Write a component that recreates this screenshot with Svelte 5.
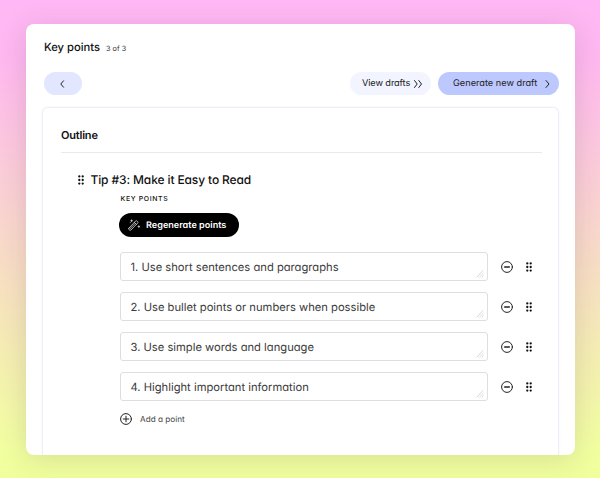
<script lang="ts">
  let points = $state([
    { id: 1, text: 'Use short sentences and paragraphs' },
    { id: 2, text: 'Use bullet points or numbers when possible' },
    { id: 3, text: 'Use simple words and language' },
    { id: 4, text: 'Highlight important information' },
  ]);

  function removePoint(id: number) {
    points = points.filter((p) => p.id !== id);
  }
</script>

{#snippet handle()}
  <svg class="handle" viewBox="0 0 6 10" width="6" height="10" fill="currentColor">
    {#each [1.4, 5, 8.6] as y}
      <circle cx="1.3" cy={y} r="1.15" />
      <circle cx="4.7" cy={y} r="1.15" />
    {/each}
  </svg>
{/snippet}

<div class="backdrop">
  <main class="card">
    <header>
      <h1>Key points</h1>
      <span class="count">3 of 3</span>
    </header>

    <nav>
      <button class="pill back" aria-label="Back">
        <svg viewBox="0 0 5 8" width="5" height="8"><path d="M3.5.8.8 4l2.7 3.2" /></svg>
      </button>
      <button class="pill drafts">
        <span>View drafts</span>
        <svg viewBox="0 0 10 8" width="10" height="8"><path d="M1.5.5l2.7 3.5-2.7 3.5M5.8.5l2.7 3.5-2.7 3.5" /></svg>
      </button>
      <button class="pill generate">
        <span>Generate new draft</span>
        <svg viewBox="0 0 5 8" width="5" height="8"><path d="m1 .5 3 3.5-3 3.5" /></svg>
      </button>
    </nav>

    <section class="panel">
      <h2>Outline</h2>
      <div class="tip">
        {@render handle()}
        <h3>Tip #3: Make it Easy to Read</h3>
      </div>

      <div class="body">
        <div class="eyebrow">KEY POINTS</div>
        <button class="regenerate">
          <svg viewBox="0 0 12 12" width="12" height="12">
            <path d="M.9 9.1 7.6 2q.7-.7 1.4 0l.7.7q.6.7-.1 1.4L2.9 11q-.7.7-1.4 0l-.7-.6q-.6-.6.1-1.3Z" />
            <path d="m6.4 3.4 2 2M2 9.8l5-5.2" />
            <path d="M3.6.9v1.6M2.8 1.7h1.6M10.8 6.8v1.6M10 7.6h1.6M2.2 3.6h.1" />
          </svg>
          <span>Regenerate points</span>
        </button>

        <ul>
          {#each points as point, i (point.id)}
            <li>
              <div class="field">
                <span>{i + 1}. {point.text}</span>
                <svg class="grip" viewBox="0 0 8 8" width="8" height="8"><path d="M.8 7.2 6.9.6M3.4 7.2l3.9-4.1M5.9 7.2l1.5-1.5" /></svg>
              </div>
              <button class="icon" aria-label="Remove point" onclick={() => removePoint(point.id)}>
                <svg viewBox="0 0 12 12" width="12" height="12">
                  <circle cx="6" cy="6" r="5.4" />
                  <path class="bar" d="M3.7 6h4.6" />
                </svg>
              </button>
              {@render handle()}
            </li>
          {/each}
        </ul>

        <button class="add">
          <svg viewBox="0 0 12 12" width="12" height="12">
            <circle cx="6" cy="6" r="5.4" />
            <path d="M3.2 6h5.6M6 3.2v5.6" />
          </svg>
          <span>Add a point</span>
        </button>
      </div>
    </section>
  </main>
</div>

<style>
  :global(body) { margin: 0; }
  .backdrop {
    box-sizing: border-box; width: 600px; height: 478px;
    padding: 24px 25.5px 23.5px 26px; overflow: hidden;
    background: linear-gradient(180deg, #ffb8f5 0%, #ffb8f0 12%, #f2ffa0 94%, #f0ff9c 100%);
    font-family: Inter, "Open Sans", sans-serif;
    font-feature-settings: "cv11";
    text-rendering: geometricPrecision;
    color: #111;
  }
  .backdrop * { box-sizing: border-box; }
  .card {
    height: 430.5px; overflow: hidden;
    padding: 0 15.5px 0 16px;
    display: flex; flex-direction: column;
    background: #fff; border-radius: 8px;
    box-shadow: 0 4px 28px rgba(60,40,70,0.15);
  }
  button {
    display: flex; align-items: center; padding: 0; border: 0;
    background: none; color: inherit; font: inherit; font-feature-settings: inherit;
    text-rendering: inherit; letter-spacing: inherit;
  }
  svg {
    flex: none; display: block; overflow: visible;
    fill: none; stroke: currentColor; stroke-width: 1;
    stroke-linecap: round; stroke-linejoin: round;
  }
  .handle { fill: currentColor; stroke: none; }
  span, h1, h2, h3 { white-space: nowrap; }
  h1, h2, h3 { margin: 0; }

  header { display: flex; align-items: baseline; gap: 6px; padding: 16px 0 0 2px; height: 48px; line-height: 14px; }
  h1 { font-size: 11.2px; font-weight: 500; }
  .count { font-size: 7.3px; color: #333; }

  nav { display: flex; gap: 7px; height: 23px; }
  .pill { height: 23px; border-radius: 12px; font-size: 9.2px; color: #222; }
  .back { width: 38px; margin: 0 auto 0 2px; padding-right: 2px; justify-content: center; background: #e2e6ff; }
  .drafts { width: 81px; padding: 0 8px 0 12px; justify-content: space-between; background: #f2f4ff; letter-spacing: -0.1px; }
  .generate { width: 121px; padding: 0 9px 0 15px; justify-content: space-between; background: #bdc8ff; }

  .panel {
    flex: 1; margin-top: 12px; padding: 0 16px 0 18px;
    border: 1.5px solid #eceefa; border-bottom: 0; border-radius: 6px 6px 0 0;
    box-shadow: 0 0 2px rgba(200,205,240,0.3);
  }
  h2 {
    height: 45px; padding-top: 20px; border-bottom: 1px solid #e9e9eb;
    font-size: 11px; font-weight: 600; line-height: 14px; letter-spacing: -0.2px;
  }
  .tip { display: flex; align-items: center; gap: 7px; height: 16px; margin: 19px 0 0 16.5px; }
  h3 { font-size: 12px; font-weight: 500; line-height: 16px; letter-spacing: -0.12px; }

  .body { padding-left: 59px; }
  .eyebrow { margin-top: 6px; padding-left: 0.5px; font-size: 6.9px; font-weight: 500; line-height: 9px; letter-spacing: 0.65px; }
  .regenerate {
    width: 120px; height: 24px; margin: 10px 0 15px -1px; padding-left: 9px; gap: 6px;
    background: #000; color: #fff; border-radius: 12px;
    font-size: 9.1px; font-weight: 600;
  }
  .regenerate svg { stroke-width: 0.8; color: #ddd; }
  ul { list-style: none; margin: 0; padding: 0; display: flex; flex-direction: column; gap: 11px; }
  li { display: flex; align-items: center; height: 29px; }
  .field {
    display: flex; align-items: center; justify-content: space-between;
    width: 368px; height: 29px; padding: 0 3px 0 9.5px;
    border: 1px solid #dddde2; border-radius: 3px;
    font-size: 11.2px; color: #3b3b3b;
  }
  .grip { align-self: flex-end; margin-bottom: 2px; color: #c9c9ce; stroke-width: 0.7; }
  .icon { margin: 0 13px 0 13px; color: #222; }
  .icon .bar { stroke-width: 1.5; }
  .add { gap: 8px; margin-top: 12px; font-size: 8.2px; color: #444; }
  .add svg { color: #222; }
</style>
